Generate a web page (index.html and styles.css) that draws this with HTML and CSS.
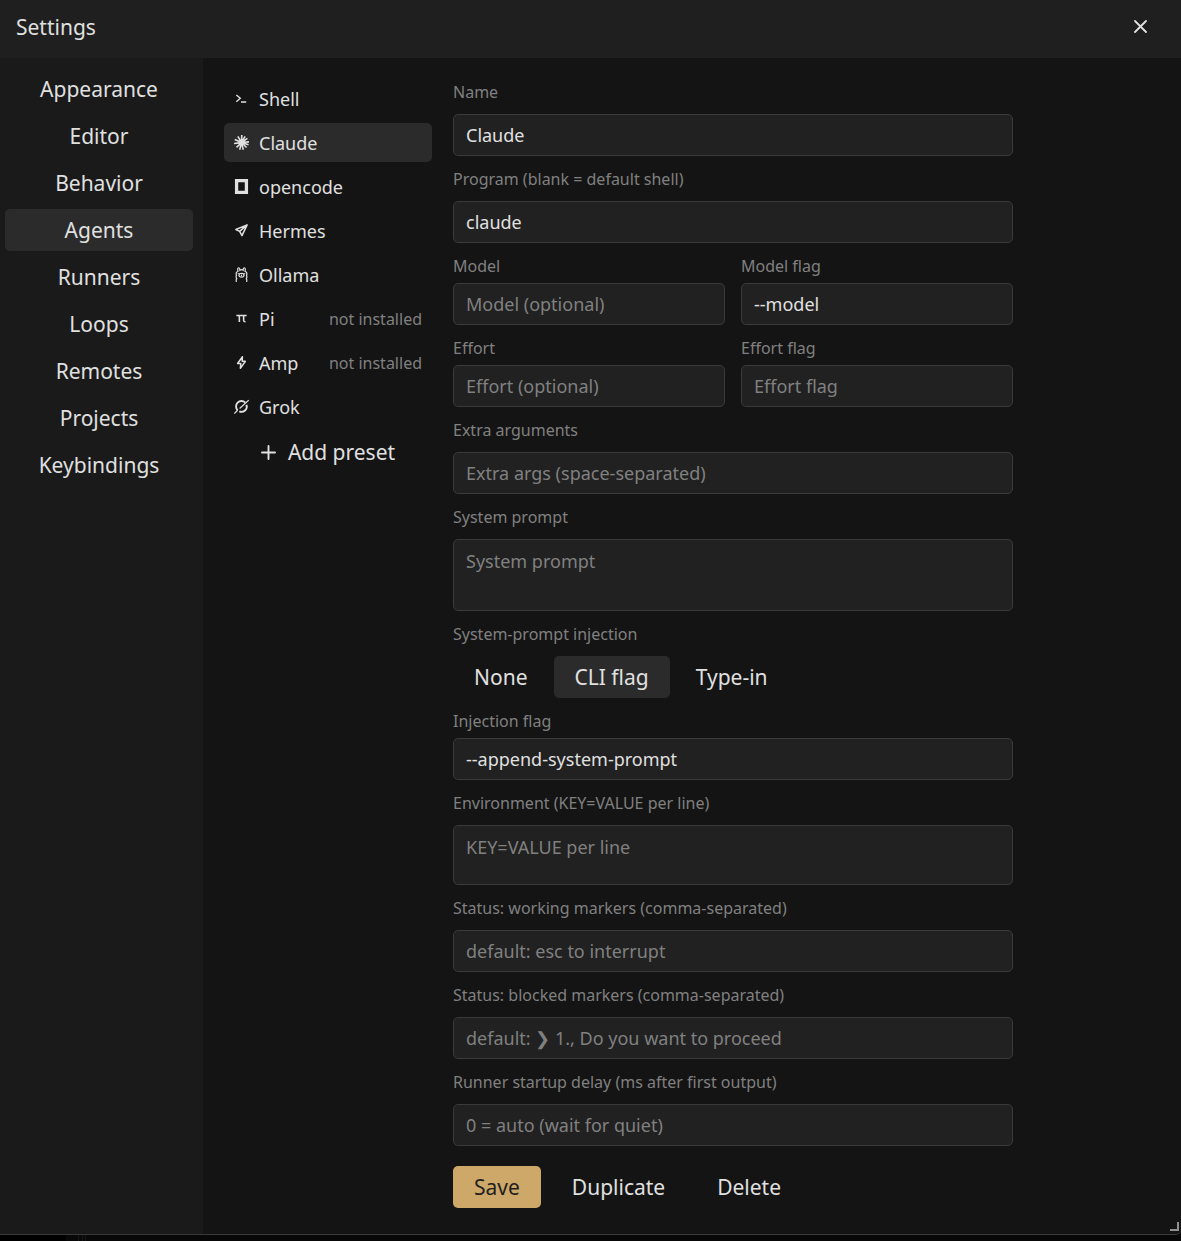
FILE: index.html
```html
<!DOCTYPE html>
<html lang="en">
<head>
<meta charset="utf-8">
<meta name="viewport" content="width=device-width, initial-scale=1">
<title>Settings</title>
<link rel="stylesheet" href="styles.css">
</head>
<body>
<main class="window">
  <header class="titlebar">
    <h1 class="title">Settings</h1>
    <button class="close" type="button" aria-label="Close">
      <svg width="13" height="13" viewBox="0 0 13 13"><path d="M1 1l11 11M12 1L1 12" stroke="currentColor" stroke-width="1.8" stroke-linecap="round"/></svg>
    </button>
  </header>
  <div class="content">
    <nav class="sidebar">
      <button class="button" type="button">Appearance</button>
      <button class="button" type="button">Editor</button>
      <button class="button" type="button">Behavior</button>
      <button class="button selected" type="button">Agents</button>
      <button class="button" type="button">Runners</button>
      <button class="button" type="button">Loops</button>
      <button class="button" type="button">Remotes</button>
      <button class="button" type="button">Projects</button>
      <button class="button" type="button">Keybindings</button>
    </nav>
    <section class="panel">
      <div class="presets">
        <button class="preset" type="button">
          <svg class="icon" viewBox="0 0 16 16"><path d="M2.500 4.200l4.200 3.600-4.200 3.600M7.500 11.700h5.500" fill="none" stroke="currentColor" stroke-width="1.500"/></svg>
          Shell
        </button>
        <button class="preset selected" type="button">
          <svg class="icon" viewBox="0 0 16 16"><path d="M8 8L8.300 0M8 8l3.800-6.500M8 8l6.300-4.500M8 8l8-.7M8 8l7.500 2.300M8 8l5.400 5.300M8 8l1.900 7.800M8 8l-1.900 7.800M8 8l-5.300 5.200M8 8L0 9M8 8L.8 4.800M8 8L4.100 1.400" stroke="currentColor" stroke-width="1.700"/></svg>
          Claude
        </button>
        <button class="preset" type="button">
          <svg class="icon" viewBox="0 0 16 16"><path d="M1 0h14v16H1zM4.500 3.500v9h7v-9z" fill="currentColor" fill-rule="evenodd"/></svg>
          opencode
        </button>
        <button class="preset" type="button">
          <svg class="icon" viewBox="0 0 16 16"><path d="M14 2L2 7l4 2 2.500 4.500zM14 2L6 9" fill="none" stroke="currentColor" stroke-width="1.600" stroke-linejoin="round"/></svg>
          Hermes
        </button>
        <button class="preset" type="button">
          <svg class="icon" viewBox="0 0 16 16"><g fill="none" stroke="currentColor" stroke-width="1.300" stroke-linecap="round"><path d="M2.500 15.400c-.5-1.200 0-2.300.4-3C2 11 2 10 2.700 9 1.800 7 2.500 5 4.300 4.500 3.600 2.500 4 .8 4.800.8c1 0 1.500 1.500 1.500 2.700 1-.7 2.400-.7 3.400 0C9.700 2.300 10.200.8 11.200.8c.8 0 1.200 1.700.5 3.700C13.500 5 14.200 7 13.300 9c.7 1 .7 2-.2 3.400.4.700.9 1.800.4 3"/><ellipse cx="8" cy="8.800" rx="2.700" ry="2"/><path d="M8 8.600v.7M4.500 7h.1M11.400 7h.1"/></g></svg>
          Ollama
        </button>
        <button class="preset" type="button">
          <svg class="icon" viewBox="0 0 16 16"><path d="M2.500 4.800h11M5.700 4.800v7M10.300 4.800v5.200q0 1.400 2 1.400" fill="none" stroke="currentColor" stroke-width="1.700"/></svg>
          Pi <span class="note">not installed</span>
        </button>
        <button class="preset" type="button">
          <svg class="icon" viewBox="0 0 16 16"><path d="M9 1.800L3.800 9h3.400L6.800 14.200l5.300-7.500H8.700z" fill="none" stroke="currentColor" stroke-width="1.600" stroke-linejoin="round"/></svg>
          Amp <span class="note">not installed</span>
        </button>
        <button class="preset" type="button">
          <svg class="icon" viewBox="0 0 16 16"><path d="M3.900 12A5.600 5.600 0 0 1 12 3.800M13.300 6.200A5.600 5.600 0 0 1 5.600 13.100" fill="none" stroke="currentColor" stroke-width="2"/><path d="M.3 15.500L3.900 12M6 10.200L15.700 1.200" stroke="currentColor" stroke-width="1.300"/></svg>
          Grok
        </button>
        <button class="button add" type="button">
          <svg width="15" height="15" viewBox="0 0 15 15"><path d="M7.500 1v13M1 7.500h13" stroke="currentColor" stroke-width="1.900" stroke-linecap="round"/></svg>
          Add preset
        </button>
      </div>
      <form class="form">
        <div class="field">
          <label for="name">Name</label>
          <input id="name" type="text" value="Claude">
        </div>
        <div class="field">
          <label for="program">Program (blank = default shell)</label>
          <input id="program" type="text" value="claude">
        </div>
        <div class="pair">
          <div class="field tight">
            <label for="model">Model</label>
            <input id="model" type="text" placeholder="Model (optional)">
          </div>
          <div class="field tight">
            <label for="model-flag">Model flag</label>
            <input id="model-flag" type="text" value="--model">
          </div>
        </div>
        <div class="pair">
          <div class="field tight">
            <label for="effort">Effort</label>
            <input id="effort" type="text" placeholder="Effort (optional)">
          </div>
          <div class="field tight">
            <label for="effort-flag">Effort flag</label>
            <input id="effort-flag" type="text" placeholder="Effort flag">
          </div>
        </div>
        <div class="field">
          <label for="args">Extra arguments</label>
          <input id="args" type="text" placeholder="Extra args (space-separated)">
        </div>
        <div class="field">
          <label for="prompt">System prompt</label>
          <textarea id="prompt" class="tall" placeholder="System prompt"></textarea>
        </div>
        <div class="field" role="group" aria-labelledby="injection">
          <span class="label" id="injection">System-prompt injection</span>
          <div class="segments">
            <button class="button" type="button">None</button>
            <button class="button selected" type="button">CLI flag</button>
            <button class="button" type="button">Type-in</button>
          </div>
        </div>
        <div class="field tight">
          <label for="injection-flag">Injection flag</label>
          <input id="injection-flag" type="text" value="--append-system-prompt">
        </div>
        <div class="field">
          <label for="env">Environment (KEY=VALUE per line)</label>
          <textarea id="env" placeholder="KEY=VALUE per line"></textarea>
        </div>
        <div class="field">
          <label for="working">Status: working markers (comma-separated)</label>
          <input id="working" type="text" placeholder="default: esc to interrupt">
        </div>
        <div class="field">
          <label for="blocked">Status: blocked markers (comma-separated)</label>
          <input id="blocked" type="text" placeholder="default: ❯ 1., Do you want to proceed">
        </div>
        <div class="field">
          <label for="delay">Runner startup delay (ms after first output)</label>
          <input id="delay" type="text" placeholder="0 = auto (wait for quiet)">
        </div>
        <div class="actions">
          <button class="button primary" type="submit">Save</button>
          <button class="button" type="button">Duplicate</button>
          <button class="button" type="button">Delete</button>
        </div>
      </form>
    </section>
  </div>
  <span class="grip"></span>
</main>
</body>
</html>
```
FILE: styles.css
```css
* {
  box-sizing: border-box;
}

body {
  margin: 0;
  min-height: 100vh;
  padding-bottom: 6px;
  display: flex;
  flex-direction: column;
  background: linear-gradient(90deg, #000 66px, #080808 66px 78px, #161616 78px 79px, #080808 79px 82px, #161616 82px 83px, #080808 83px 85px, #161616 85px 86px, #080808 86px);
  color: #e0e0e0;
  font: 21px/28px "Noto Sans", sans-serif;
}

.window {
  position: relative;
  flex: 1;
  display: flex;
  flex-direction: column;
  overflow: hidden;
  background: #141414;
  border-bottom: 1px solid #3a3a3a;
  border-radius: 0 0 5px 0;
}

.titlebar {
  display: flex;
  align-items: center;
  justify-content: space-between;
  height: 58px;
  padding: 0 20px 4px 16px;
  background: #1f1f1f;
}

.title {
  margin: 0;
  font-size: 21px;
  font-weight: 400;
}

button {
  border: 0;
  background: none;
  color: inherit;
  font: inherit;
}

.close {
  display: grid;
  place-items: center;
  width: 42px;
  height: 42px;
  padding: 0 0 1px;
}

.content {
  flex: 1;
  display: flex;
}

.sidebar {
  flex: 0 0 203px;
  display: flex;
  flex-direction: column;
  gap: 5px;
  padding: 10px 10px 10px 5px;
  background: #1a1a1a;
}

.button {
  height: 42px;
  padding: 0 21px;
  border-radius: 5px;
  white-space: nowrap;
}

.selected {
  background: #2b2b2b;
}

.primary {
  background: #cda869;
  color: #1f1f1f;
}

.panel {
  flex: 1;
  display: flex;
  gap: 21px;
  padding: 21px;
}

.presets {
  flex: 0 0 208px;
  display: flex;
  flex-direction: column;
  gap: 5px;
}

.preset {
  display: flex;
  align-items: center;
  gap: 10px;
  height: 39px;
  padding: 0 10px;
  border-radius: 5px;
  font-size: 18px;
  text-align: left;
}

.icon {
  width: 15px;
  height: 15px;
}

.note {
  margin-left: auto;
  color: #808080;
  font-size: 16px;
}

.add {
  display: flex;
  align-items: center;
  justify-content: center;
  gap: 12px;
}

.form {
  flex: 1;
  max-width: 560px;
  display: flex;
  flex-direction: column;
  gap: 10px;
}

.field {
  display: flex;
  flex-direction: column;
  gap: 10px;
}

.tight {
  gap: 5px;
}

.pair {
  display: grid;
  grid-template-columns: 1fr 1fr;
  gap: 16px;
}

label,
.label {
  padding-top: 2px;
  color: #808080;
  font-size: 16px;
  line-height: 23px;
}

input,
textarea {
  display: block;
  width: 100%;
  height: 42px;
  margin: 0;
  padding: 0 12px;
  border: 1px solid #3a3a3a;
  border-radius: 5px;
  outline: 0;
  background: #212121;
  color: #e0e0e0;
  font: 18px/25px "Noto Sans", sans-serif;
}

textarea {
  height: 60px;
  padding: 9px 12px;
  resize: none;
}

.tall {
  height: 72px;
}

::placeholder {
  color: #808080;
  opacity: 1;
}

.segments {
  display: flex;
  gap: 5px;
}

.actions {
  display: flex;
  gap: 10px;
  padding-top: 10px;
}

.grip {
  position: absolute;
  right: 2px;
  bottom: 3px;
  width: 9px;
  height: 9px;
  border: solid #909090;
  border-width: 0 2px 2px 0;
}
```
